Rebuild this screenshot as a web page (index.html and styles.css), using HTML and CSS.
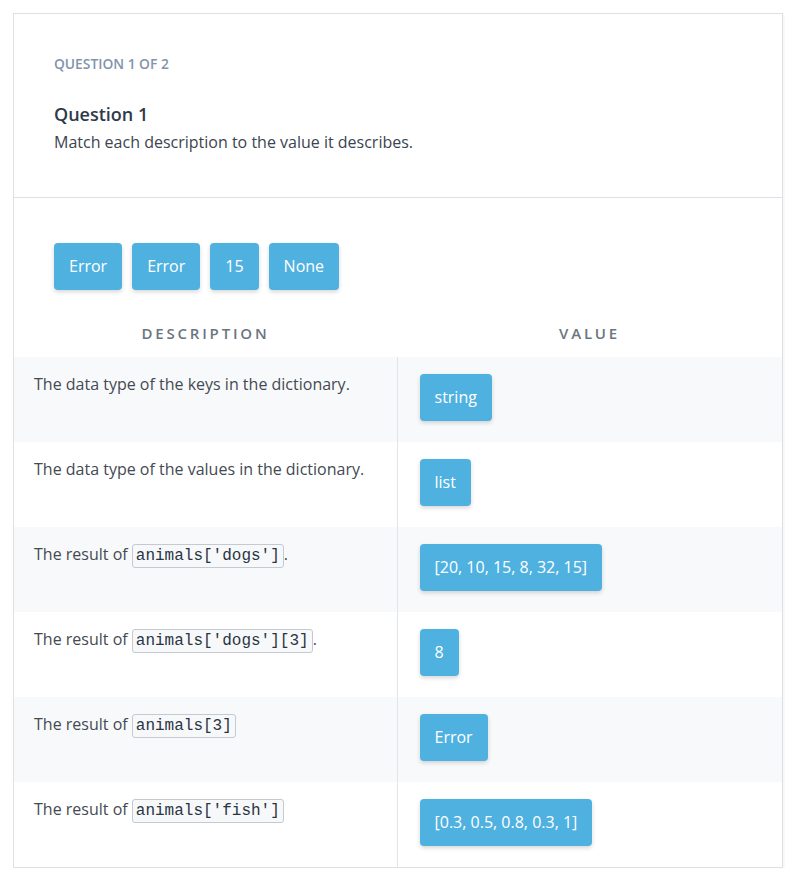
FILE: index.html
```html
<!DOCTYPE html>
<html>
<head>
<meta charset="utf-8">
<link rel="stylesheet" href="styles.css">
</head>
<body>
<div class="card">
  <div class="head">
    <div class="label">QUESTION 1 OF 2</div>
    <div class="title">Question 1</div>
    <div class="desc">Match each description to the value it describes.</div>
  </div>
  <div class="body">
    <div class="bank">
      <span class="chip">Error</span>
      <span class="chip">Error</span>
      <span class="chip">15</span>
      <span class="chip">None</span>
    </div>
    <table class="match">
      <thead>
        <tr><th>DESCRIPTION</th><th>VALUE</th></tr>
      </thead>
      <tbody>
        <tr class="alt"><td class="d">The data type of the keys in the dictionary.</td><td class="v"><span class="chip">string</span></td></tr>
        <tr><td class="d">The data type of the values in the dictionary.</td><td class="v"><span class="chip">list</span></td></tr>
        <tr class="alt"><td class="d">The result of <code>animals['dogs']</code>.</td><td class="v"><span class="chip">[20, 10, 15, 8, 32, 15]</span></td></tr>
        <tr><td class="d">The result of <code>animals['dogs'][3]</code>.</td><td class="v"><span class="chip">8</span></td></tr>
        <tr class="alt"><td class="d">The result of <code>animals[3]</code></td><td class="v"><span class="chip">Error</span></td></tr>
        <tr><td class="d">The result of <code>animals['fish']</code></td><td class="v"><span class="chip">[0.3, 0.5, 0.8, 0.3, 1]</span></td></tr>
      </tbody>
    </table>
  </div>
</div>
</body>
</html>
```
FILE: styles.css
```css
* { box-sizing: border-box; }
body {
  margin: 13px;
  background: #fff;
  font-family: "Open Sans", "Noto Sans", sans-serif;
}
.card {
  width: 770px;
  border: 1px solid #dde1e6;
  background: #fff;
  box-shadow: 0 1px 6px rgba(0,0,0,0.08);
}
.head {
  padding: 40px 40px 43px;
  border-bottom: 1px solid #dde1e6;
}
.label {
  font-size: 13.8px;
  font-weight: 600;
  line-height: 20px;
  color: #8194ab;
}
.title {
  margin-top: 28px;
  font-size: 18px;
  font-weight: 600;
  line-height: 24px;
  color: #2f3a48;
}
.desc {
  margin-top: 4px;
  font-size: 16px;
  line-height: 24px;
  color: #3b4451;
}
.body {
  padding-top: 45px;
}
.bank {
  display: flex;
  gap: 10px;
  padding: 0 40px;
  margin-bottom: 20px;
}
.chip {
  display: inline-block;
  background: #4fb1e0;
  color: #fff;
  font-size: 16px;
  line-height: 23px;
  padding: 12px 15px;
  border-radius: 4px;
  box-shadow: 0 2px 4px rgba(0,0,0,0.16);
}
.match {
  width: 100%;
  border-collapse: collapse;
  table-layout: fixed;
}
.match th {
  font-size: 15px;
  font-weight: 600;
  letter-spacing: 2.8px;
  color: #6b7581;
  line-height: 24px;
  padding: 11px 0 12px;
  text-align: center;
}
.match th:first-child { width: 383px; }
.match tbody tr { height: 85px; }
.match tr.alt { background: #f8f9fb; }
.match td {
  vertical-align: top;
}
.match td.d {
  padding: 15px 20px;
  font-size: 16px;
  line-height: 24px;
  color: #444a52;
  border-right: 1px solid #e2e5e9;
}
.match td.v {
  padding: 17px 22px;
}
code {
  font-family: "Liberation Mono", "DejaVu Sans Mono", monospace;
  font-size: 16px;
  color: #2a3442;
  background: #f7f8fa;
  border: 1px solid #c5cad1;
  border-radius: 3px;
  padding: 2px 3px;
}
```
